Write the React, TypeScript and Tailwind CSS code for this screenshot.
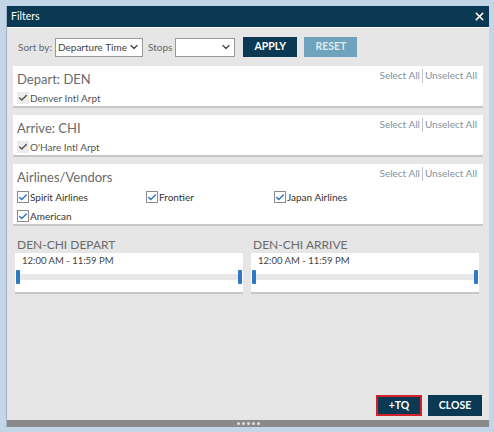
import { ChevronDown, X, Check } from 'lucide-react'

const font = { fontFamily: 'Lato, "Open Sans", sans-serif' }

function LinkPair() {
  return (
    <div className="flex items-start text-[10px] leading-[13px] text-[#8193a3]">
      <span className="pr-[2px]">Select All</span>
      <span className="w-px h-[14px] bg-[#b8c2cc]" />
      <span className="pl-[2px]">Unselect All</span>
    </div>
  )
}

function Card({ title, children, h }: { title: string; children: React.ReactNode; h: string }) {
  return (
    <div className={`bg-white border-b-2 border-[#c6c6c6] px-[4px] pt-[3px] ${h}`}>
      <div className="flex justify-between pr-[2px]">
        <div className="pt-[1px] text-[13px] leading-[18px] text-[#6a6a6a]">{title}</div>
        <LinkPair />
      </div>
      {children}
    </div>
  )
}

function Box({ label }: { label: string }) {
  return (
    <div className="flex items-center gap-[1px] h-[14px] text-[10px] text-[#333]">
      <span className="w-[12px] h-[12px] border border-[#8a8a8a] bg-white flex items-center justify-center">
        <Check className="w-[11px] h-[11px] text-[#2f78c4]" strokeWidth={3.5} />
      </span>
      <span>{label}</span>
    </div>
  )
}

function Airport({ label }: { label: string }) {
  return (
    <div className="flex items-center gap-[1px] h-[12px] mt-[4px] text-[10px] text-[#555]">
      <span className="w-[12px] h-[12px] bg-[#ececec] flex items-center justify-center">
        <Check className="w-[10px] h-[10px] text-[#555]" strokeWidth={3.5} />
      </span>
      {label}
    </div>
  )
}

function Range({ title }: { title: string }) {
  return (
    <div className="flex-1">
      <div className="pl-[2px] text-[12px] leading-[16px] text-[#6a6a6a]">{title}</div>
      <div className="bg-white border-b-2 border-[#c6c6c6] h-[41px] px-[1px] pt-[2px]">
        <div className="pl-[6px] text-[9.5px] leading-[12px] text-[#444]">12:00 AM - 11:59 PM</div>
        <div className="relative mt-[7px] h-[6px] bg-[#e8e8e8]">
          <span className="absolute left-0 top-[-4px] w-[4px] h-[14px] rounded-[1px] bg-[#2f78c4]" />
          <span className="absolute right-0 top-[-4px] w-[4px] h-[14px] rounded-[1px] bg-[#2f78c4]" />
        </div>
      </div>
    </div>
  )
}

export default function App() {
  return (
    <div className="w-[494px] h-[432px] bg-[#c3d6e8] pl-[6px] pr-[5px] pt-[6px] pb-[5px]" style={font}>
      <div className="h-full flex flex-col bg-[#e6e6e6] border-l border-[#9fb3c6]">
        {/* title bar */}
        <div className="h-[22px] shrink-0 bg-[#0b3954] flex items-center justify-between pl-[4px] pr-[3px] border-b border-white">
          <span className="text-[10.5px] text-white">Filters</span>
          <X className="w-[13px] h-[13px] text-white" strokeWidth={3} />
        </div>

        {/* toolbar */}
        <div className="flex items-center gap-[3px] pl-[11px] h-[38px] shrink-0 text-[10px] text-[#666] whitespace-nowrap">
          <span>Sort by:</span>
          <div className="w-[88px] h-[19px] shrink-0 bg-white border border-[#999] flex items-center justify-between pl-[2px] pr-[2px] text-[#444]">
            <span>Departure Time</span>
            <ChevronDown className="w-[12px] h-[12px] text-[#444]" strokeWidth={2.5} />
          </div>
          <span className="ml-[2px]">Stops</span>
          <div className="w-[60px] h-[19px] shrink-0 bg-white border border-[#999] flex items-center justify-end pr-[2px]">
            <ChevronDown className="w-[12px] h-[12px] text-[#444]" strokeWidth={2.5} />
          </div>
          <div className="ml-[5px] w-[54px] h-[20px] bg-[#0b3954] flex items-center justify-center text-[10.5px] font-bold text-white">APPLY</div>
          <div className="ml-[4px] w-[53px] h-[20px] bg-[#6fa3bd] flex items-center justify-center text-[10.5px] font-bold text-[#dfe9ef]">RESET</div>
        </div>

        <div className="flex flex-col gap-[7px] px-[6px]">
          <Card title="Depart: DEN" h="h-[42px]">
            <Airport label="Denver Intl Arpt" />
          </Card>
          <Card title="Arrive: CHI" h="h-[42px]">
            <Airport label="O'Hare Intl Arpt" />
          </Card>
          <Card title="Airlines/Vendors" h="h-[62px]">
            <div className="grid grid-cols-[129px_128px_1fr] gap-y-[5px] mt-[4px]">
              <Box label="Spirit Airlines" />
              <Box label="Frontier" />
              <Box label="Japan Airlines" />
              <Box label="American" />
            </div>
          </Card>
        </div>

        <div className="flex gap-[8px] pl-[8px] pr-[10px] pt-[11px]">
          <Range title="DEN-CHI DEPART" />
          <Range title="DEN-CHI ARRIVE" />
        </div>

        <div className="flex-1" />
        <div className="flex justify-end gap-[6px] pr-[7px] pb-[4px]">
          <div className="w-[46px] h-[21px] bg-[#0b3954] border-2 border-[#d0202a] flex items-center justify-center text-[10.5px] font-bold text-white">+TQ</div>
          <div className="w-[54px] h-[21px] bg-[#0b3954] flex items-center justify-center text-[10.5px] font-bold text-white">CLOSE</div>
        </div>
        <div className="h-[7px] shrink-0 bg-[#8a8a8a] flex items-center justify-center gap-[2px]">
          {[0, 1, 2, 3, 4].map(i => (
            <span key={i} className="w-[3px] h-[3px] rounded-full bg-[#e0e0e0]" />
          ))}
        </div>
      </div>
    </div>
  )
}
